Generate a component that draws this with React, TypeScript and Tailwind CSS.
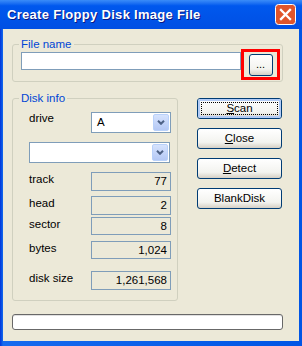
import { ReactNode } from "react";

const Legend = ({ children }: { children: ReactNode }) => (
  <span className="absolute left-[6px] top-[-8px] bg-[#ECE9D8] px-[2px] text-[11.5px] leading-[14px] text-[#0046D5]">
    {children}
  </span>
);

const Arrow = () => (
  <div className="flex h-[17px] w-[16px] items-center justify-center rounded-[2px] border border-[#B9D1FA] bg-linear-to-b from-[#D6E3FD] to-[#B4C8F5]">
    <svg width="8" height="5" viewBox="0 0 8 5">
      <polyline points="1,0.8 4,3.8 7,0.8" fill="none" stroke="#4D6185" strokeWidth="2" />
    </svg>
  </div>
);

const Combo = ({ value, cls }: { value: string; cls: string }) => (
  <div className={"flex items-center border border-[#7F9DB9] bg-white p-[1px] " + cls}>
    <span className="flex-1 pl-[4px] text-[11.5px] leading-[13px] text-black">{value}</span>
    <Arrow />
  </div>
);

const XpButton = ({ children, focused }: { children: ReactNode; focused?: boolean }) => (
  <div className="h-[21px] w-[85px] rounded-[3px] border border-[#003C74] bg-linear-to-b from-white via-[#F3F3EF] via-70% to-[#D6D0C5]">
    <div
      className={
        focused
          ? "flex h-full w-full items-center justify-center rounded-[2px] shadow-[inset_0_0_0_2px_#B3CCF6]"
          : "flex h-full w-full items-center justify-center"
      }
    >
      {focused ? (
        <div className="flex h-[13px] w-[77px] items-center justify-center border border-dotted border-black">
          <span className="text-[11.5px] leading-[13px] text-black">{children}</span>
        </div>
      ) : (
        <span className="text-[11.5px] leading-[13px] text-black">{children}</span>
      )}
    </div>
  </div>
);

const rows = [
  { label: "track", value: "77", cls: "mt-[9px]", h: "h-[19px]" },
  { label: "head", value: "2", cls: "mt-[5px]", h: "h-[19px]" },
  { label: "sector", value: "8", cls: "mt-[2px]", h: "h-[18px]" },
  { label: "bytes", value: "1,024", cls: "mt-[6px]", h: "h-[18px]" },
  { label: "disk size", value: "1,261,568", cls: "mt-[12px]", h: "h-[19px]" },
];

export default function App() {
  return (
    <div className="flex h-[346px] w-[302px] flex-col bg-[#0055E5] font-['Liberation_Sans',Arial,sans-serif]">
      {/* title bar */}
      <div className="flex h-[29px] shrink-0 items-center bg-linear-to-b from-[#3A8CF8] via-[#0058EE] via-20% to-[#004FE3] pl-[7px] pr-[6px]">
        <span className="text-[13px] font-bold tracking-[0.3px] text-white [text-shadow:1px_1px_0_#0A1883]">
          Create Floppy Disk Image File
        </span>
        {/* close box */}
        <svg className="ml-auto" width="21" height="21" viewBox="0 0 21 21">
          <rect x="0.5" y="0.5" width="20" height="20" rx="3" fill="#E0552B" stroke="#FFFFFF" />
          <path d="M6 6 L15 15 M15 6 L6 15" stroke="#FFFFFF" strokeWidth="2.3" strokeLinecap="square" />
        </svg>
      </div>

      <div className="flex flex-1 bg-linear-to-r from-[#0831D9] via-[#166AEE] via-1% to-[#0055E5] pb-[5px] pl-[3px] pr-[3px]">
        <div className="flex flex-1 flex-col bg-[#ECE9D8] pl-[9px] pt-[15px]">
          {/* File name */}
          <div className="relative flex h-[38px] w-[271px] items-start rounded-[3px] border border-[#D0D0BF] pl-[8px] pt-[4px]">
            <Legend>File name</Legend>
            <div className="mt-[3px] h-[18px] w-[220px] border border-[#7F9DB9] bg-white" />
            <div className="flex h-[31px] w-[39px] items-center justify-center border-[3px] border-[#FF0000]">
              <div className="flex h-[22px] w-[24px] items-center justify-center rounded-[3px] border border-[#003C74] bg-linear-to-b from-white via-[#F3F3EF] via-70% to-[#D6D0C5]">
                <span className="text-[11px] leading-[11px] text-black">...</span>
              </div>
            </div>
          </div>

          <div className="mt-[16px] flex items-start">
            {/* Disk info */}
            <div className="relative flex h-[203px] w-[166px] flex-col rounded-[3px] border border-[#D0D0BF] pl-[16px] pt-[13px]">
              <Legend>Disk info</Legend>
              <div className="flex items-start">
                <span className="w-[62px] text-[11.5px] leading-[13px] text-black">drive</span>
                <Combo value="A" cls="h-[21px] w-[80px]" />
              </div>
              <Combo value="" cls="mt-[9px] h-[21px] w-[141px]" />
              {rows.map((r) => (
                <div key={r.label} className={"flex items-start " + r.cls}>
                  <span className="w-[62px] pt-[1px] text-[11.5px] leading-[13px] text-black">{r.label}</span>
                  <div className={"flex w-[80px] items-center justify-end border border-[#7F9DB9] bg-[#ECE9D8] pr-[3px] " + r.h}>
                    <span className="text-[11.5px] leading-[13px] text-black">{r.value}</span>
                  </div>
                </div>
              ))}
            </div>

            {/* buttons */}
            <div className="ml-[19px] flex flex-col gap-[9px]">
              <XpButton focused>
                <span className="underline">S</span>can
              </XpButton>
              <XpButton>
                <span className="underline">C</span>lose
              </XpButton>
              <XpButton>
                <span className="underline">D</span>etect
              </XpButton>
              <XpButton>BlankDisk</XpButton>
            </div>
          </div>

          {/* progress */}
          <div className="mt-[13px] h-[16px] w-[271px] rounded-[3px] border border-[#686868] bg-white shadow-[inset_0_1px_0_#E0E0E0]" />
        </div>
      </div>
    </div>
  );
}
